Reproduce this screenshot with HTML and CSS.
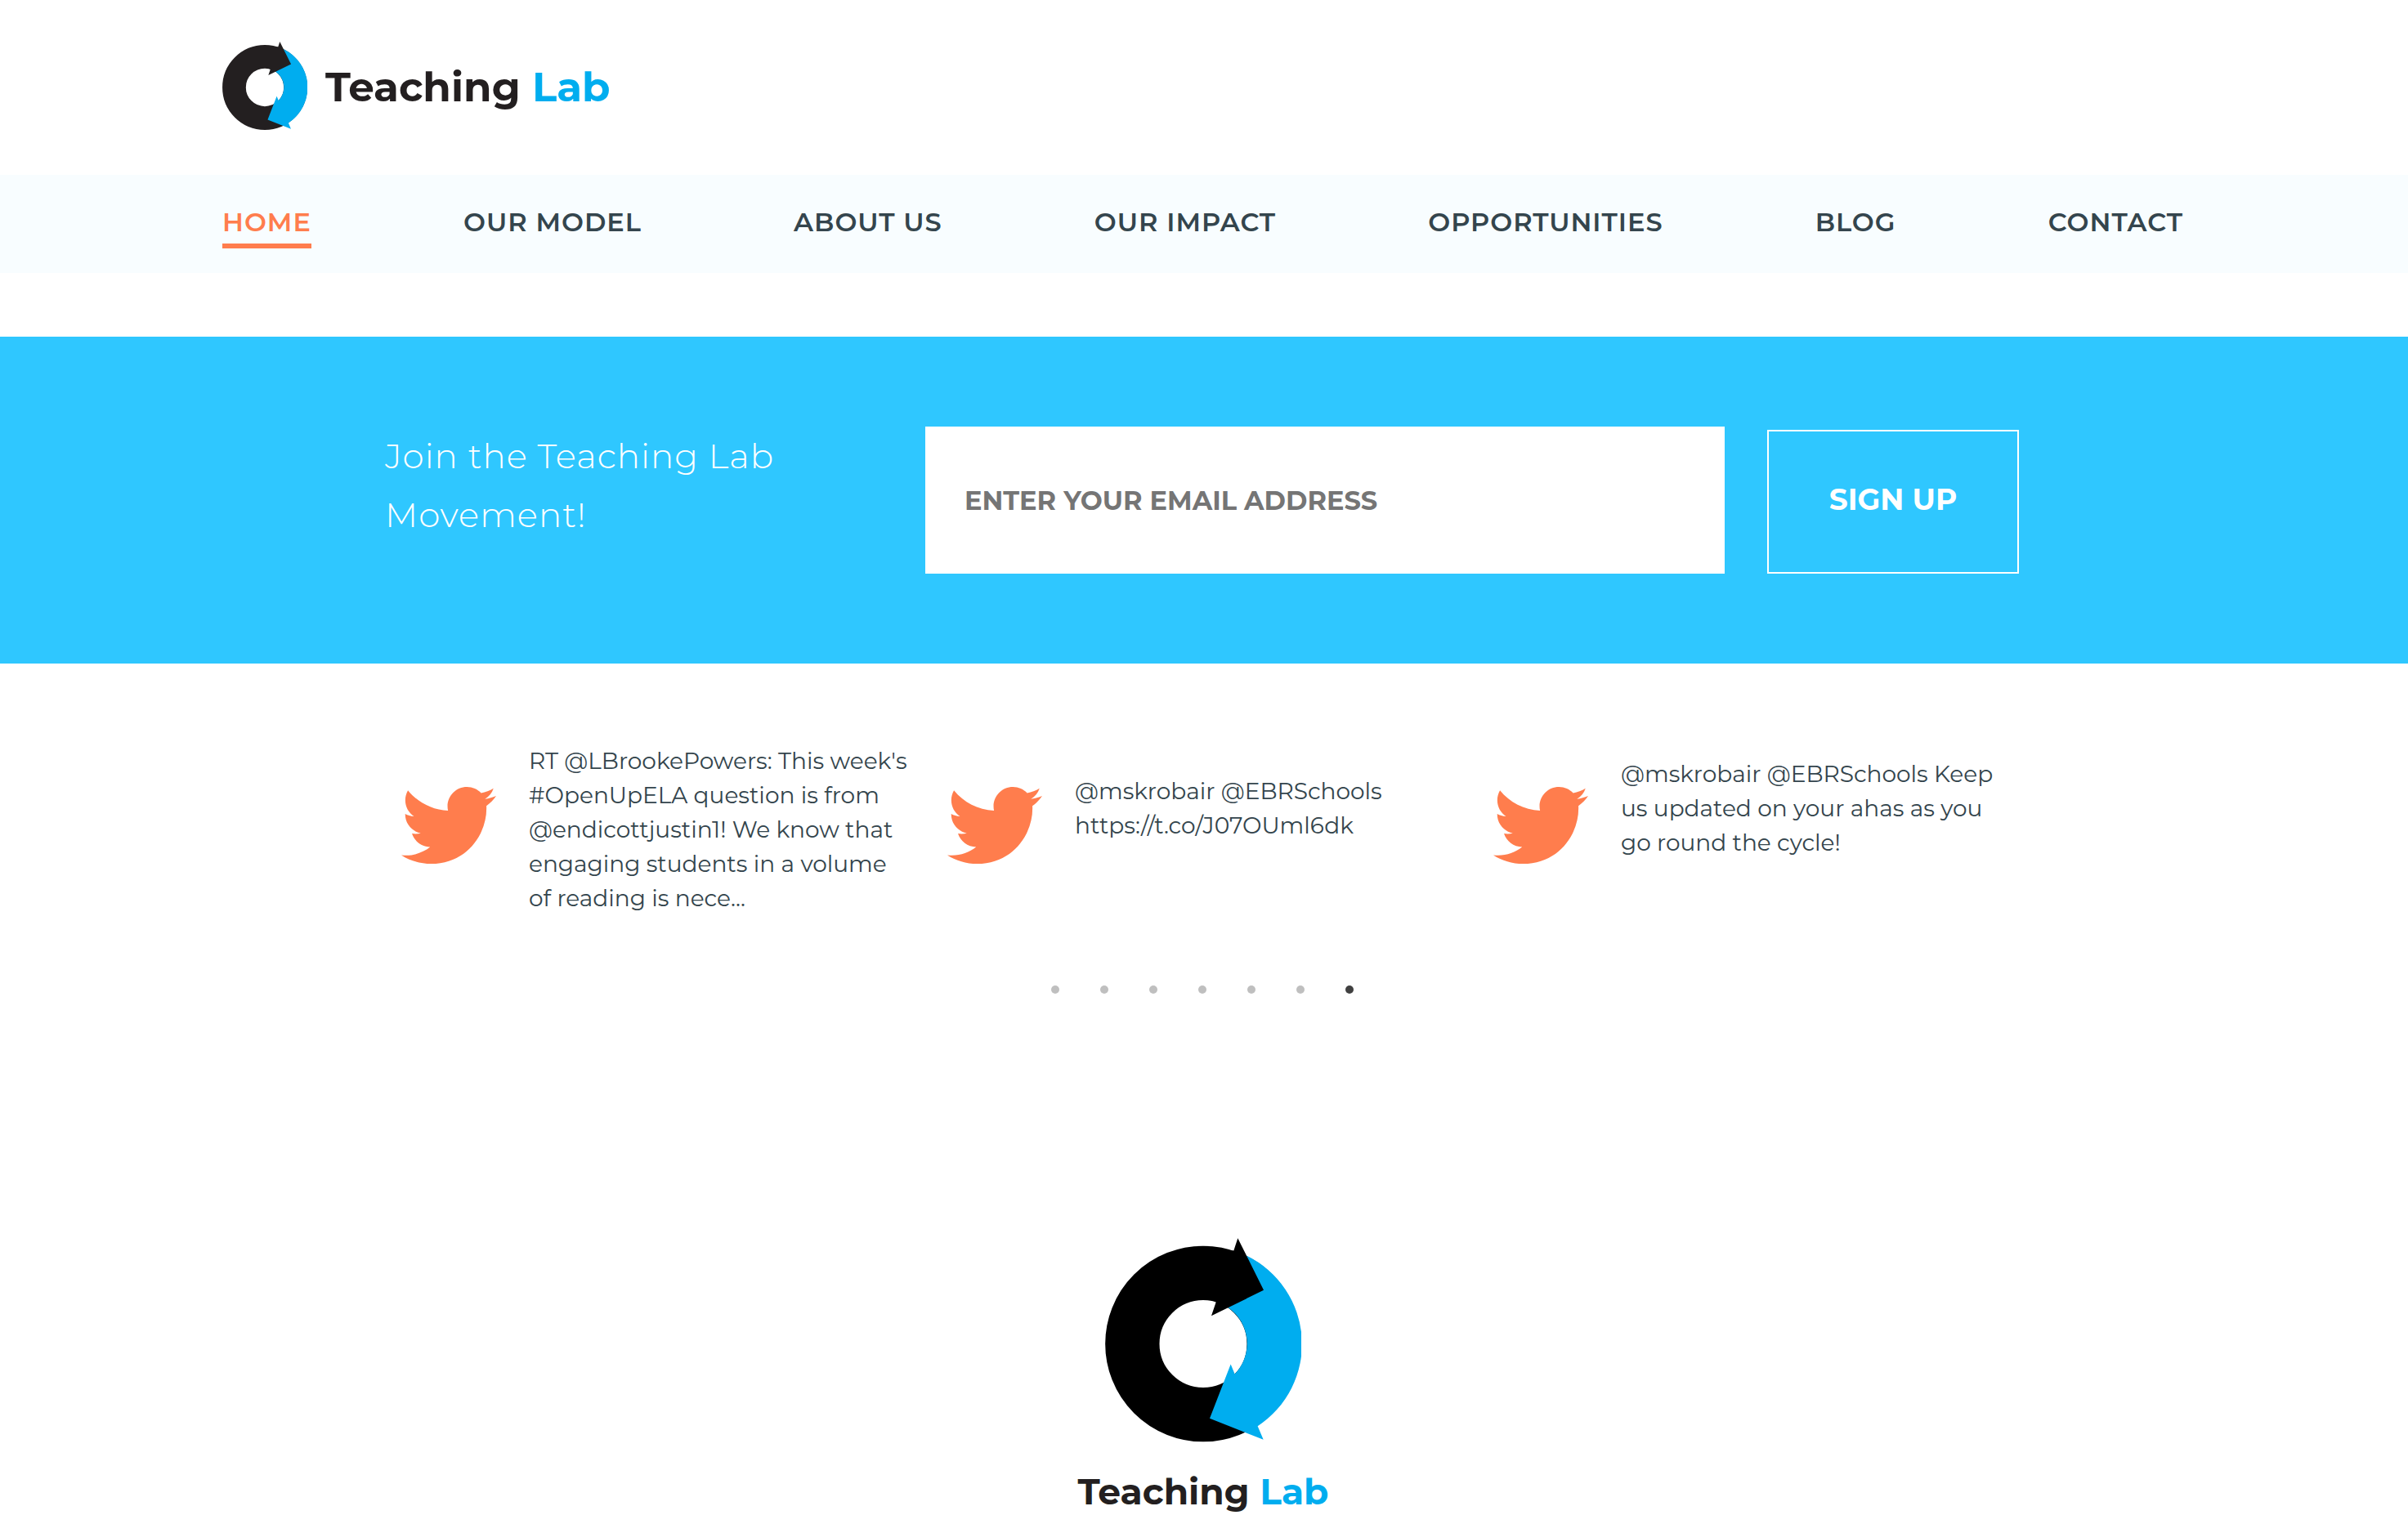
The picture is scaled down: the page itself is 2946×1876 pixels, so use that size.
FILE: index.html
```html
<!DOCTYPE html>
<html lang="en">
<head>
<meta charset="utf-8">
<meta name="viewport" content="width=device-width, initial-scale=1">
<title>Teaching Lab</title>
<link rel="stylesheet" href="styles.css">
</head>
<body>
<svg class="sprite" aria-hidden="true">
  <symbol id="mark" viewBox="156 48 720 749">
    <circle cx="516" cy="436" r="260" fill="none" stroke="currentColor" stroke-width="199"/>
    <path fill="#00adef" d="M676 113A360 360 0 0 1 716 738L737 788L540 710L617 511L632 547A161 161 0 0 0 608 303Z"/>
    <path fill="currentColor" d="M628 94L643 48L738 239L546 333L563 283L516 260V90Z"/>
  </symbol>
  <symbol id="bird" viewBox="0 48 512 416">
    <path fill="currentColor" d="M459.37 151.716c.325 4.548.325 9.097.325 13.645 0 138.72-105.583 298.558-298.558 298.558-59.452 0-114.68-17.219-161.137-47.106 8.447.974 16.568 1.299 25.34 1.299 49.055 0 94.213-16.568 130.274-44.832-46.132-.975-84.792-31.188-98.112-72.772 6.498.974 12.995 1.624 19.818 1.624 9.421 0 18.843-1.3 27.614-3.573-48.081-9.747-84.143-51.98-84.143-102.985v-1.299c13.969 7.797 30.214 12.67 47.431 13.319-28.264-18.843-46.781-51.005-46.781-87.391 0-19.492 5.197-37.36 14.294-52.954 51.655 63.675 129.3 105.258 216.365 109.807-1.624-7.797-2.599-15.918-2.599-24.04 0-57.828 46.782-104.934 104.934-104.934 30.213 0 57.502 12.67 76.67 33.137 23.715-4.548 46.456-13.32 66.599-25.34-7.798 24.366-24.366 44.833-46.132 57.827 21.117-2.273 41.584-8.122 60.426-16.243-14.292 20.791-32.161 39.308-52.628 54.253z"/>
  </symbol>
</svg>

<header>
  <div class="wrap masthead">
    <a class="brand" href="#"><svg class="brand-mark" aria-hidden="true"><use href="#mark"/></svg><span class="wordmark">Teaching <span class="accent">Lab</span></span></a>
  </div>
  <nav class="nav">
    <div class="wrap nav-row">
      <a class="nav-link current" href="#">HOME</a>
      <a class="nav-link" href="#">OUR MODEL</a>
      <a class="nav-link" href="#">ABOUT US</a>
      <a class="nav-link" href="#">OUR IMPACT</a>
      <a class="nav-link" href="#">OPPORTUNITIES</a>
      <a class="nav-link" href="#">BLOG</a>
      <a class="nav-link" href="#">CONTACT</a>
    </div>
  </nav>
</header>

<main>
  <section class="signup">
    <form class="signup-form">
      <label class="signup-title" for="email">Join the Teaching Lab Movement!</label>
      <input class="signup-input" id="email" type="email" placeholder="ENTER YOUR EMAIL ADDRESS">
      <button class="signup-button" type="submit">SIGN UP</button>
    </form>
  </section>

  <section class="tweets">
    <article class="tweet">
      <svg class="bird" aria-hidden="true"><use href="#bird"/></svg>
      <p class="tweet-text">RT @LBrookePowers: This week's #OpenUpELA question is from @endicottjustin1! We know that engaging students in a volume of reading is nece...</p>
    </article>
    <article class="tweet">
      <svg class="bird" aria-hidden="true"><use href="#bird"/></svg>
      <p class="tweet-text">@mskrobair @EBRSchools https://t.co/J07OUml6dk</p>
    </article>
    <article class="tweet">
      <svg class="bird" aria-hidden="true"><use href="#bird"/></svg>
      <p class="tweet-text">@mskrobair @EBRSchools Keep us updated on your ahas as you go round the cycle!</p>
    </article>
  </section>
  <div class="dots">
    <button class="dot" type="button" aria-label="Slide 1"></button>
    <button class="dot" type="button" aria-label="Slide 2"></button>
    <button class="dot" type="button" aria-label="Slide 3"></button>
    <button class="dot" type="button" aria-label="Slide 4"></button>
    <button class="dot" type="button" aria-label="Slide 5"></button>
    <button class="dot" type="button" aria-label="Slide 6"></button>
    <button class="dot active" type="button" aria-label="Slide 7"></button>
  </div>
</main>

<footer class="footer">
  <svg class="footer-mark" aria-hidden="true"><use href="#mark"/></svg>
  <span class="wordmark footer-wordmark">Teaching <span class="accent">Lab</span></span>
</footer>
</body>
</html>
```
FILE: styles.css
```css
* {
  box-sizing: border-box;
}

body {
  margin: 0;
  background: #fff;
  color: #34454d;
  font-family: Montserrat, Inter, "Liberation Sans", sans-serif;
}

a {
  color: inherit;
  text-decoration: none;
}

.sprite {
  display: none;
}

.wrap {
  max-width: 2402px;
  margin: 0 auto;
}

.masthead {
  padding: 50px 0 54px;
}

.brand {
  display: inline-flex;
  align-items: center;
  gap: 22px;
  vertical-align: top;
}

.brand-mark {
  width: 104px;
  height: 110px;
  color: #231f20;
}

.wordmark {
  padding-top: 4px;
  color: #231f20;
  font-size: 50px;
  font-weight: 700;
  line-height: 60px;
  white-space: nowrap;
}

.accent {
  color: #00adef;
}

.nav {
  background: #f8fdff;
}

.nav-row {
  display: flex;
  justify-content: space-between;
  padding: 34px 3px 30px 0;
}

.nav-link {
  border-bottom: 6px solid transparent;
  padding: 9px 0 11px;
  font-size: 32px;
  font-weight: 600;
  letter-spacing: 1px;
  line-height: 30px;
}

.current {
  border-color: #ff7d4d;
  color: #ff7d4d;
}

.signup {
  margin-top: 78px;
  padding: 110px 32px;
  background: #2fc7ff;
}

.signup-form {
  display: grid;
  grid-template-columns: 609px 1fr 308px;
  column-gap: 52px;
  max-width: 2004px;
  margin: 0 auto;
  padding-right: 5px;
}

.signup-title {
  max-width: 540px;
  color: #fff;
  font-size: 42px;
  font-weight: 300;
  letter-spacing: 1px;
  line-height: 72px;
}

.signup-input {
  height: 180px;
  border: 0;
  padding: 0 48px;
  background: #fff;
  font: 700 32px Montserrat, Inter, sans-serif;
}

.signup-input::placeholder {
  color: #757575;
  opacity: 1;
}

.signup-button {
  height: 176px;
  margin-top: 4px;
  border: 2px solid #fff;
  padding: 0 0 6px;
  background: none;
  color: #fff;
  font: 700 36px Montserrat, Inter, sans-serif;
}

.tweets {
  display: grid;
  grid-template-columns: repeat(3, 1fr);
  max-width: 2004px;
  margin: 0 auto;
  padding-top: 98px;
}

.tweet {
  display: grid;
  grid-template-columns: 116px 1fr;
  column-gap: 40px;
  align-items: start;
  padding-left: 20px;
}

.bird {
  width: 116px;
  height: 96px;
  margin-top: 52px;
  color: #ff7d4d;
}

.tweet-text {
  display: flex;
  align-items: center;
  min-height: 158px;
  max-width: 470px;
  margin: 0;
  font-size: 28px;
  line-height: 42px;
}

.dots {
  display: flex;
  justify-content: center;
  gap: 20px;
  margin-top: 71px;
  padding-right: 4px;
}

.dot {
  display: grid;
  place-items: center;
  width: 40px;
  height: 40px;
  border: 0;
  padding: 0;
  background: none;
}

.dot::before {
  width: 10px;
  height: 10px;
  border-radius: 50%;
  background: #bfbfbf;
  content: "";
}

.active::before {
  background: #404040;
}

.footer {
  display: flex;
  flex-direction: column;
  align-items: center;
  gap: 26px;
  padding: 284px 2px 16px 0;
}

.footer-mark {
  width: 240px;
  height: 250px;
  color: #000;
}

.footer-wordmark {
  font-size: 44px;
}
```
